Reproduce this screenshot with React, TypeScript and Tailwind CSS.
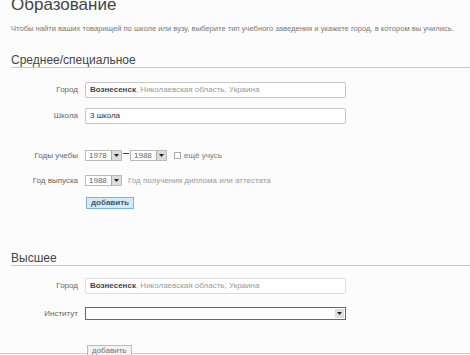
const Arrow = () => (
  <span className="flex h-full w-[10px] items-center justify-center border-l border-[#aaa] bg-[#dcdcdc]">
    <svg width="5" height="3" viewBox="0 0 5 3">
      <path d="M0 0h5L2.5 3z" fill="#222" />
    </svg>
  </span>
);

const Year = ({ value }: { value: string }) => (
  <div className="flex h-[11px] w-[37px] items-center border border-[#bbb] bg-white">
    <span className="flex-1 pl-[3px] text-[8px] leading-none text-[#666]">{value}</span>
    <Arrow />
  </div>
);

const Row = ({ label, children, gap = "ml-[7px]" }: { label: string; children: React.ReactNode; gap?: string }) => (
  <div className="flex items-center">
    <span className="w-[78px] text-right text-[8px] leading-none text-[#666]">{label}</span>
    <div className={`${gap} flex items-center`}>{children}</div>
  </div>
);

const City = ({ disabled }: { disabled?: boolean }) => (
  <div
    className={`flex h-[16px] w-[261px] items-center rounded-[2px] border bg-white pl-[4px] text-[8px] ${
      disabled ? "border-[#ddd]" : "border-[#c6c6c6]"
    }`}
  >
    <span className="font-bold text-[#444]">Вознесенск</span>
    <span className="text-[#999]">, Николаевская область, Украина</span>
  </div>
);

export default function App() {
  return (
    <div className="h-[355px] w-[470px] overflow-hidden bg-[#fcfcfc] font-['Liberation_Sans',Arial,sans-serif]">
      <h1 className="-mt-[5px] ml-[11px] text-[17px] leading-[20px] text-[#444]">Образование</h1>
      <p className="ml-[11px] mt-[9px] text-[7.6px] leading-[10px] text-[#777]">
        Чтобы найти ваших товарищей по школе или вузу, выберите тип учебного заведения и укажете город, в котором вы учились.
      </p>

      <h2 className="ml-[11px] mt-[19px] border-b border-[#c8c8c8] text-[12px] leading-[14px] text-[#444]">
        Среднее/специальное
      </h2>

      <div className="mt-[14px]">
        <Row label="Город">
          <City />
        </Row>
      </div>
      <div className="mt-[10px]">
        <Row label="Школа">
          <div className="flex h-[16px] w-[261px] items-center rounded-[2px] border border-[#c6c6c6] bg-white pl-[4px] text-[8px] text-[#333]">
            3 школа
          </div>
        </Row>
      </div>

      <div className="mt-[26px]">
        <Row label="Годы учебы">
          <Year value="1978" />
          <span className="mx-[1px] -mt-[4px] h-[1px] w-[6px] bg-[#444]" />
          <Year value="1988" />
          <span className="ml-[7px] h-[7px] w-[7px] border border-[#aaa] bg-white" />
          <span className="ml-[3px] text-[8px] leading-none text-[#777]">ещё учусь</span>
        </Row>
      </div>
      <div className="mt-[14px]">
        <Row label="Год выпуска">
          <Year value="1988" />
          <span className="ml-[6px] text-[8px] leading-none text-[#999]">Год получения диплома или аттестата</span>
        </Row>
      </div>

      <button className="ml-[86px] mt-[11px] flex h-[12px] items-center border border-[#7fb6d6] bg-[#d3ebf7] px-[4px] text-[8px] font-bold leading-none text-[#3a5a78]">
        добавить
      </button>

      <h2 className="ml-[11px] mt-[42px] border-b border-[#c8c8c8] text-[12px] leading-[14px] text-[#444]">Высшее</h2>

      <div className="mt-[12px]">
        <Row label="Город">
          <City disabled />
        </Row>
      </div>
      <div className="mt-[13px]">
        <Row label="Институт">
          <div className="flex h-[13px] w-[261px] items-center justify-end border border-[#666] bg-white pr-[1px]">
            <span className="flex h-[9px] w-[9px] items-center justify-center bg-[#dcdcdc]">
              <svg width="5" height="3" viewBox="0 0 5 3">
                <path d="M0 0h5L2.5 3z" fill="#222" />
              </svg>
            </span>
          </div>
        </Row>
      </div>

      <div className="mt-[25px] h-[9px] border-b border-[#ccc]">
        <button className="relative ml-[87px] flex h-[12px] items-center border border-[#bbb] bg-[#f2f2f2] px-[4px] text-[8px] leading-none text-[#777]">
          добавить
        </button>
      </div>
    </div>
  );
}
